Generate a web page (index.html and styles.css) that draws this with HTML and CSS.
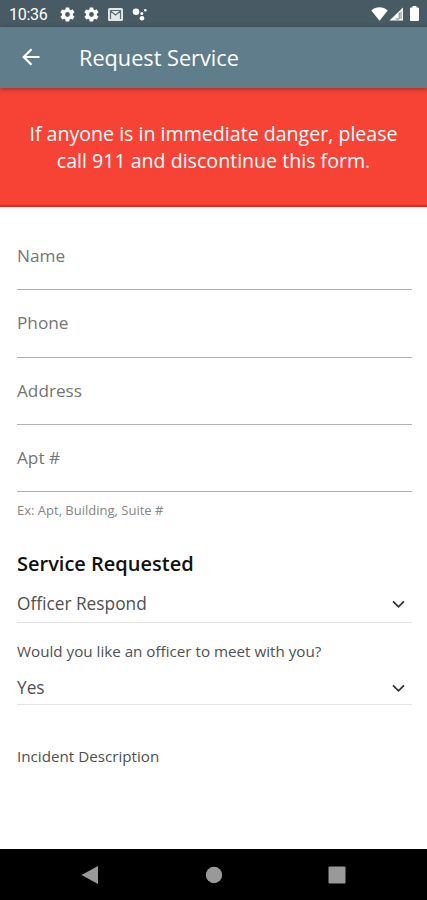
FILE: index.html
```html
<!DOCTYPE html>
<html lang="en">
<head>
    <meta charset="utf-8">
    <title>Request Service</title>
    <link rel="stylesheet" href="styles.css">
</head>
<body>
    <div class="status-bar">
        <span class="clock">10:36</span>
        <svg class="gear" viewBox="2 2 20 20"><path id="gear" fill-rule="evenodd" d="M19.1 12.9a7 7 0 0 0 0-1.8l2-1.6c.2-.1.2-.4.1-.6l-1.9-3.3c-.1-.2-.4-.3-.6-.2l-2.4 1a7 7 0 0 0-1.6-.9l-.4-2.5c0-.2-.2-.4-.5-.4h-3.8c-.2 0-.4.2-.5.4l-.3 2.5a7 7 0 0 0-1.6.9l-2.4-1c-.2-.1-.5 0-.6.2L2.7 8.9c-.1.2-.1.5.1.6l2 1.6a7 7 0 0 0 0 1.8l-2 1.6c-.2.1-.2.4-.1.6l1.900 3.300c.1.2.4.3.6.2l2.400-1c.5.4 1 .7 1.600.9l.3 2.500c.1.2.3.4.5.4h3.800c.3 0 .5-.2.5-.4l.4-2.500a7 7 0 0 0 1.600-.9l2.400 1c.2.1.5 0 .6-.2l1.900-3.300c.1-.2.1-.5-.1-.6zM12 15.200a3.200 3.200 0 1 1 0-6.400 3.200 3.200 0 0 1 0 6.400z"/></svg>
        <svg class="gear" viewBox="2 2 20 20"><use href="#gear"/></svg>
        <svg class="mail" viewBox="0 0 15 13"><rect width="15" height="13" rx="1.5"/><path class="mail-flap" d="M2.500 11V3l5 4 5-4v8M2.500 2.500h10"/></svg>
        <svg class="dots" viewBox="0 0 15 13"><circle cx="4" cy="3.700" r="3.300"/><circle cx="9.800" cy="5.500" r="1.500"/><circle cx="13.300" cy="2.200" r="1.300"/><circle cx="10" cy="10.300" r="2.300"/></svg>
        <div class="signals">
            <svg class="wifi" viewBox="0 0 17 14"><path d="M.3 3.500C5-.7 12-.7 16.700 3.500L8.500 13.700z"/></svg>
            <svg class="cell" viewBox="0 0 15 14"><path d="M14 .5v13H.5z"/><path class="cell-gap" d="M10.200 5.500v6.500H6.500M12 4.500V12"/></svg>
            <svg class="battery" viewBox="0 0 9 15"><path d="M2.500 0h4v1.500H8q1 0 1 1V14q0 1-1 1H1q-1 0-1-1V2.500q0-1 1-1h1.500z"/></svg>
        </div>
    </div>

    <header class="app-bar">
        <svg class="back" viewBox="0 0 18 18"><path d="M17.500 9H2M9.500 1.200L1.700 9l7.800 7.800"/></svg>
        <h1>Request Service</h1>
    </header>

    <div class="alert">If anyone is in immediate danger, please<br>call 911 and discontinue this form.</div>

    <main class="form">
        <div class="field">Name</div>
        <div class="field">Phone</div>
        <div class="field">Address</div>
        <div class="field">Apt #</div>
        <p class="hint">Ex: Apt, Building, Suite #</p>

        <h2>Service Requested</h2>
        <div class="select">
            <span>Officer Respond</span>
            <svg class="chevron" viewBox="0 0 13 9"><path d="M1 1.300l5.500 5.500L12 1.300"/></svg>
        </div>
        <p class="question">Would you like an officer to meet with you?</p>
        <div class="select select-answer">
            <span>Yes</span>
            <svg class="chevron" viewBox="0 0 13 9"><path d="M1 1.300l5.500 5.500L12 1.300"/></svg>
        </div>
        <p class="description">Incident Description</p>
    </main>

    <nav class="nav-bar">
        <svg viewBox="0 0 18 18"><path d="M17 0v18L.5 9z"/></svg>
        <svg viewBox="0 0 18 18"><circle cx="9" cy="9" r="8.200"/></svg>
        <svg viewBox="0 0 18 18"><rect x=".5" y=".5" width="17" height="17" rx="1"/></svg>
    </nav>
</body>
</html>
```

FILE: styles.css
```css
* { box-sizing: border-box; }
body {
    margin: 0;
    height: 900px;
    display: flex;
    flex-direction: column;
    overflow: hidden;
    background: #fff;
    font-family: "Open Sans", sans-serif;
}
h1, h2, p { margin: 0; }
svg { display: block; flex: none; }

/* Android status bar */
.status-bar {
    height: 27px;
    padding: 1px 8px 0 9px;
    display: flex;
    align-items: center;
    background: #485b65;
    color: #fff;
    fill: #fff;
}
.clock { width: 51px; font: 16px Roboto, sans-serif; letter-spacing: -0.3px; }
.gear { width: 15px; height: 15px; margin-right: 9px; }
.mail { width: 15px; height: 13px; margin-right: 9px; fill: #e4e8ea; }
.mail-flap { fill: none; stroke: #596b74; stroke-width: 1.2; }
.dots { width: 15px; height: 13px; }
.signals { display: flex; align-items: center; margin: -1px 0 0 auto; }
.wifi { width: 17px; height: 14px; }
.cell { width: 15px; height: 14px; margin: 0 6px 0 1px; }
.cell-gap { fill: none; stroke: #6f7f87; stroke-width: 1; }
.battery { width: 9px; height: 15px; }

.app-bar {
    position: relative;
    height: 61px;
    padding-left: 22px;
    display: flex;
    align-items: center;
    background: #607d8b;
    box-shadow: 0 1px 5px rgba(0, 0, 0, 0.4);
    color: #fff;
}
.back { width: 18px; height: 18px; margin: -2px 39px 0 0; fill: none; stroke: #fff; stroke-width: 2.2; }
h1 { font-size: 21.7px; font-weight: 400; line-height: 30px; }

.alert {
    height: 119px;
    padding-top: 32px;
    background: #f74336;
    border-bottom: 2px solid #f32213;
    color: #fff;
    font-size: 19.6px;
    line-height: 27px;
    text-align: center;
}

.form { flex: 1; padding: 16px 15.5px 0 17px; color: #505050; }
.field {
    height: 67.3px;
    padding-top: 21px;
    border-bottom: 1px solid #b0b0b0;
    color: #757575;
    font-size: 17.2px;
    line-height: 24px;
}
.hint { margin-top: 9px; color: #858585; font-size: 13px; line-height: 18px; }
h2 { margin-top: 31px; color: #111; font-size: 20px; font-weight: 600; line-height: 28px; }
.select {
    height: 45px;
    padding: 9px 7px 0 0;
    display: flex;
    justify-content: space-between;
    align-items: flex-start;
    border-bottom: 1px solid #e4e4e4;
    font-size: 17.3px;
    line-height: 34px;
}
.chevron { width: 13px; height: 9px; margin-top: 13px; fill: none; stroke: #333; stroke-width: 1.8; }
.question { margin-top: 17px; font-size: 15.2px; line-height: 22px; }
.select-answer { height: 43px; }
.description { margin-top: 40px; font-size: 15.2px; line-height: 22px; }

.nav-bar {
    height: 51px;
    padding: 0 81px;
    display: flex;
    justify-content: space-between;
    align-items: center;
    background: #000;
    fill: #999;
}
.nav-bar svg { width: 18px; height: 18px; }
```
